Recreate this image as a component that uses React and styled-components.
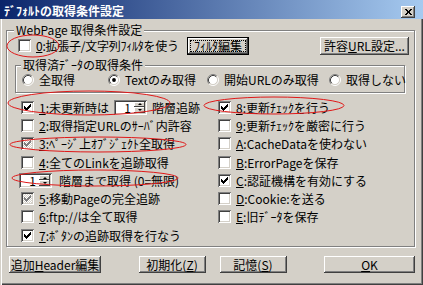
import React from 'react'
import styled, { createGlobalStyle } from 'styled-components'

const GlobalStyle = createGlobalStyle`
  html, body {
    margin: 0;
    padding: 0;
    background: #d4d0c8;
  }
  body {
    font-family: "Noto Sans CJK JP", "Noto Sans", sans-serif;
    font-size: 12px;
    color: #000;
  }
`

const Window = styled.div`
  position: relative;
  width: 423px;
  height: 285px;
  box-sizing: border-box;
  background: #d4d0c8;
  box-shadow: inset 1px 0 #d4d0c8, inset 2px 0 #fff, inset -1px -1px #404040, inset -2px -2px #808080;
  overflow: hidden;
`

const TitleBar = styled.div`
  display: flex;
  align-items: center;
  justify-content: space-between;
  height: 19px;
  box-sizing: border-box;
  padding: 3px 8px 0 4px;
  background: linear-gradient(90deg, #0a246a, #a6caf0);
  color: #fff;
  font-weight: bold;
  line-height: 14px;
  white-space: nowrap;
`

const CloseBox = styled.span`
  display: flex;
  align-items: center;
  justify-content: center;
  align-self: flex-end;
  margin-bottom: 1px;
  width: 14px;
  height: 12px;
  box-sizing: border-box;
  background: #d4d0c8;
  box-shadow: inset -1px -1px #404040, inset 1px 1px #fff, inset -2px -2px #808080;
`

const Body = styled.div`
  padding: 4px 0 0 6px;
`

const Group = styled.fieldset`
  width: ${p => p.$w}px;
  margin: ${p => p.$m || '0'};
  padding: 0 0 ${p => p.$pb || 0}px;
  box-sizing: border-box;
  border: 1px solid #808080;
  box-shadow: inset 1px 1px #fff, 1px 1px #fff;
  min-inline-size: 0;
`

const Legend = styled.legend`
  margin-left: ${p => p.$indent}px;
  padding: 0 2px;
  height: 14px;
  line-height: 14px;
  background: #d4d0c8;
  white-space: nowrap;
`

const FilterRow = styled.div`
  display: flex;
  align-items: center;
  height: 19px;
  margin-top: -1px;
  padding: 0 5px 0 11px;
`

const CheckItem = styled.label`
  display: flex;
  align-items: center;
  gap: 5px;
  width: ${p => (p.$w ? `${p.$w}px` : 'auto')};
  line-height: 13px;
  letter-spacing: ${p => p.$tight ? '-0.25px' : 'normal'};
  white-space: nowrap;
`

const Box = styled.span`
  flex: none;
  display: flex;
  align-items: center;
  justify-content: center;
  width: 13px;
  height: 13px;
  box-sizing: border-box;
  background: ${p => (p.$grayed ? 'repeating-conic-gradient(#fff 0 25%, #d4d0c8 0 50%) 0 0 / 2px 2px' : '#fff')};
  box-shadow: inset 1px 1px #808080, inset -1px -1px #fff, inset 2px 2px #404040, inset -2px -2px #d4d0c8;
`

const Key = styled.u`
  text-decoration: underline;
  text-underline-offset: 1px;
`

const CheckGrid = styled.div`
  display: grid;
  grid-template-columns: 197px 1fr;
  grid-template-rows: repeat(8, 18.3px);
  grid-auto-flow: column;
  align-items: center;
  margin-top: 5px;
  padding: 0 0 2px 14px;
`

const RadioRow = styled.div`
  display: grid;
  grid-template-columns: 86px 99px 122px auto;
  align-items: center;
  height: 13px;
  margin-top: 1px;
  padding-left: 6px;
`

const RadioItem = styled.label`
  display: flex;
  align-items: center;
  gap: 5px;
  line-height: 13px;
  white-space: nowrap;
`

const Spin = styled.span`
  flex: none;
  display: flex;
  width: 33px;
  height: 15px;
  box-sizing: border-box;
  padding: 2px;
  margin: ${p => p.$m || '0'};
  background: #fff;
  box-shadow: inset 1px 1px #808080, inset -1px -1px #fff, inset 2px 2px #404040, inset -2px -2px #d4d0c8;
`

const SpinValue = styled.span`
  flex: 1;
  text-align: right;
  padding-right: 3px;
  line-height: 11px;
`

const SpinArrows = styled.span`
  display: flex;
  flex-direction: column;
  width: 11px;
`

const SpinArrow = styled.span`
  flex: 1;
  display: flex;
  align-items: center;
  justify-content: center;
  background: #d4d0c8;
  box-shadow: inset -1px -1px #404040, inset 1px 1px #fff;
  &::after {
    content: '';
    border-left: 2px solid transparent;
    border-right: 2px solid transparent;
    border-${p => (p.$down ? 'top' : 'bottom')}: 2px solid #000;
  }
`

const Button = styled.button`
  position: relative;
  flex: none;
  width: ${p => p.$w}px;
  height: ${p => p.$h || 18}px;
  box-sizing: border-box;
  padding: 0;
  margin: ${p => p.$m || '0'};
  border: ${p => (p.$default ? '1px solid #000' : 'none')};
  background: #d4d0c8;
  font: inherit;
  line-height: 13px;
  color: #000;
  white-space: nowrap;
  box-shadow: inset -1px -1px #404040, inset 1px 1px #fff, inset -2px -2px #808080;
  &::after {
    content: '';
    display: ${p => (p.$default ? 'block' : 'none')};
    position: absolute;
    inset: 2px;
    border: 1px dotted #000;
  }
`

const ButtonBar = styled.div`
  display: flex;
  justify-content: space-between;
  align-items: center;
  width: 406px;
  margin: 9px 0 0 3px;
`

const Pair = styled.div`
  display: flex;
  gap: 14px;
`

const Marks = styled.svg`
  position: absolute;
  left: 0;
  top: 0;
  pointer-events: none;
`

const CHECK_PIXELS = [
  [6, 0, 1], [5, 1, 2], [0, 2, 1], [4, 2, 3], [0, 3, 2], [3, 3, 3], [0, 4, 5], [1, 5, 3], [2, 6, 1],
]

const CheckMark = ({ color }) => (
  <svg width="7" height="7" viewBox="0 0 7 7" shapeRendering="crispEdges" fill={color}>
    {CHECK_PIXELS.map(([x, y, w]) => <rect key={`${x}-${y}`} x={x} y={y} width={w} height="1" />)}
  </svg>
)

const CLOSE_PIXELS = [
  [0, 0, 2], [5, 0, 2], [1, 1, 2], [4, 1, 2], [2, 2, 3], [2, 3, 3], [1, 4, 2], [4, 4, 2], [0, 5, 2], [5, 5, 2],
]

const CloseGlyph = () => (
  <svg width="7" height="6" viewBox="0 0 7 6" shapeRendering="crispEdges" fill="#000">
    {CLOSE_PIXELS.map(([x, y, w]) => <rect key={`${x}-${y}`} x={x} y={y} width={w} height="1" />)}
  </svg>
)

const RadioDot = ({ on }) => (
  <svg width="12" height="12" viewBox="0 0 12 12" style={{ flex: 'none' }}>
    <circle cx="6" cy="6" r="4.5" fill="#fff" />
    <path d="M2.11 9.89 A5.5 5.5 0 0 1 9.89 2.11" stroke="#808080" fill="none" />
    <path d="M9.89 2.11 A5.5 5.5 0 0 1 2.11 9.89" stroke="#fff" fill="none" />
    <path d="M2.82 9.18 A4.5 4.5 0 0 1 9.18 2.82" stroke="#404040" fill="none" />
    <path d="M9.18 2.82 A4.5 4.5 0 0 1 2.82 9.18" stroke="#d4d0c8" fill="none" />
    {on && <circle cx="6" cy="6" r="1.9" fill="#000" />}
  </svg>
)

const Check = ({ k, label, checked, grayed, w, tight, children }) => (
  <CheckItem $w={w} $tight={tight}>
    <Box $grayed={grayed}>
      {checked && <CheckMark color={grayed ? '#808080' : '#000'} />}
    </Box>
    <span><Key>{k}</Key>{label}</span>
    {children}
  </CheckItem>
)

const Spinner = ({ value, m }) => (
  <Spin $m={m}>
    <SpinValue>{value}</SpinValue>
    <SpinArrows>
      <SpinArrow />
      <SpinArrow $down />
    </SpinArrows>
  </Spin>
)

const radios = ['全取得', 'Textのみ取得', '開始URLのみ取得', '取得しない']

const App = () => (
  <>
    <GlobalStyle />
    <Window>
      <TitleBar>
        <span>ﾃﾞﾌｫﾙﾄの取得条件設定</span>
        <CloseBox><CloseGlyph /></CloseBox>
      </TitleBar>
      <Body>
        <Group $w={409}>
          <Legend $indent={7}>WebPage 取得条件設定</Legend>
          <FilterRow>
            <Check k="0" label=":拡張子/文字列ﾌｨﾙﾀを使う" w={169} tight />
            <Button $w={62} $default>ﾌｨﾙﾀ編集</Button>
            <Button $w={89} $m="0 0 0 auto">許容<Key>U</Key>RL設定...</Button>
          </FilterRow>
          <Group $w={390} $m="3px 0 0 8px" $pb={6}>
            <Legend $indent={5}>取得済ﾃﾞｰﾀの取得条件</Legend>
            <RadioRow>
              {radios.map((r, i) => (
                <RadioItem key={r}>
                  <RadioDot on={i === 1} />
                  <span>{r}</span>
                </RadioItem>
              ))}
            </RadioRow>
          </Group>
          <CheckGrid>
            <Check k="1" label=":未更新時は" checked>
              <Spinner value="1" />
              <span>階層追跡</span>
            </Check>
            <Check k="2" label=":取得指定URLのｻｰﾊﾞ内許容" />
            <Check k="3" label=":ﾍﾟｰｼﾞ上ｵﾌﾞｼﾞｪｸﾄ全取得" checked grayed />
            <Check k="4" label=":全てのLinkを追跡取得" />
            <CheckItem>
              <Spinner value="1" m="0 2px 0 -2px" />
              <span>階層まで取得 (0=無限)</span>
            </CheckItem>
            <Check k="5" label=":移動Pageの完全追跡" checked grayed />
            <Check k="6" label=":ftp://は全て取得" />
            <Check k="7" label=":ﾎﾞﾀﾝの追跡取得を行なう" checked />
            <Check k="8" label=":更新ﾁｪｯｸを行う" checked />
            <Check k="9" label=":更新ﾁｪｯｸを厳密に行う" />
            <Check k="A" label=":CacheDataを使わない" />
            <Check k="B" label=":ErrorPageを保存" />
            <Check k="C" label=":認証機構を有効にする" checked />
            <Check k="D" label=":Cookie:を送る" />
            <Check k="E" label=":旧ﾃﾞｰﾀを保存" />
          </CheckGrid>
        </Group>
        <ButtonBar>
          <Button $w={92} $h={17}>追加<Key>H</Key>eader編集</Button>
          <Pair>
            <Button $w={67} $h={17}>初期化(<Key>Z</Key>)</Button>
            <Button $w={67} $h={17}>記憶(<Key>S</Key>)</Button>
          </Pair>
          <Button $w={91} $h={17}><Key>O</Key>K</Button>
        </ButtonBar>
      </Body>
      <Marks width="423" height="285" fill="none" stroke="#e01818" strokeWidth="1">
        <ellipse cx="33" cy="46" rx="26" ry="11" />
        <ellipse cx="89" cy="103" rx="81" ry="12" />
        <ellipse cx="274" cy="105.5" rx="70" ry="8.5" />
        <ellipse cx="98" cy="144.5" rx="88" ry="7.5" />
        <ellipse cx="95" cy="178" rx="83" ry="8" />
      </Marks>
    </Window>
  </>
)

export default App
